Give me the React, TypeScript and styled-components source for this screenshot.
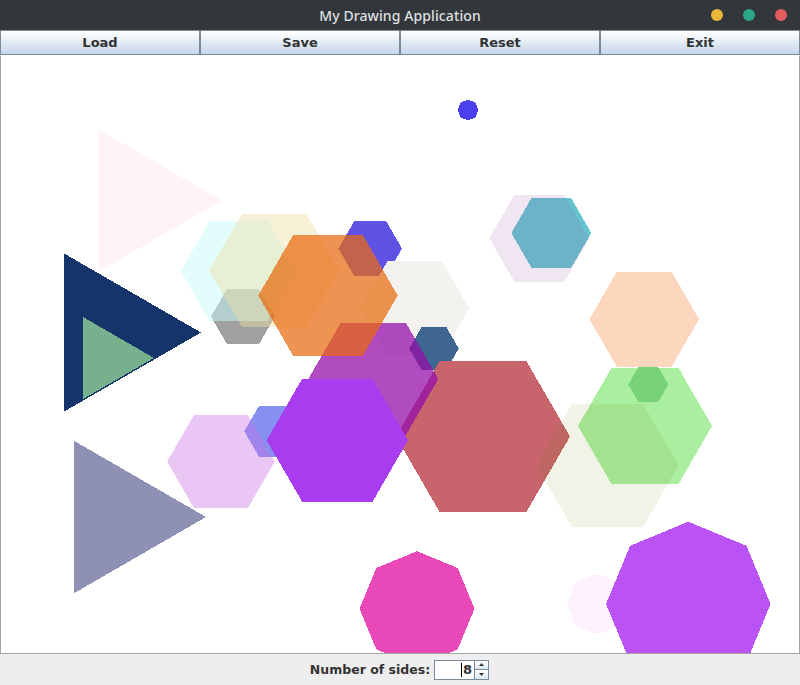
import React from "react";
import styled, { createGlobalStyle } from "styled-components";

const Global = createGlobalStyle`
  html, body { margin: 0; padding: 0; width: 800px; height: 685px; overflow: hidden; background: #eeeeee; }
  #root { width: 800px; height: 685px; }
`;

const Window = styled.div`
  width: 800px;
  height: 685px;
  display: flex;
  flex-direction: column;
  background: #eeeeee;
`;

const TitleBar = styled.div`
  height: 30px;
  flex: none;
  background: #33363b;
  display: grid;
  grid-template-columns: 1fr auto 1fr;
  align-items: center;
`;

const Title = styled.div`
  grid-column: 2;
  font-family: "Noto Sans", "DejaVu Sans", sans-serif;
  font-size: 14px;
  font-weight: 500;
  color: #dfe0e1;
  letter-spacing: 0.1px;
`;

const Controls = styled.div`
  grid-column: 3;
  justify-self: end;
  display: flex;
  gap: 20px;
  padding-right: 13px;
`;

const Dot = styled.span<{ $c: string }>`
  width: 12px;
  height: 12px;
  border-radius: 50%;
  background: ${(p) => p.$c};
`;

const Toolbar = styled.div`
  height: 25px;
  flex: none;
  display: grid;
  grid-template-columns: repeat(4, 1fr);
  background: #ffffff;
`;

const Button = styled.button`
  box-sizing: border-box;
  height: 25px;
  margin: 0;
  padding: 0;
  border: 1px solid #7a8a99;
  background: linear-gradient(#ffffff 0%, #f3f7fb 25%, #dce7f2 60%, #c5d7ea 100%);
  font-family: "DejaVu Sans", sans-serif;
  font-weight: bold;
  font-size: 13px;
  color: #333333;
  cursor: pointer;
`;

const Canvas = styled.div`
  flex: 1;
  box-sizing: border-box;
  background: #ffffff;
  border: 1px solid #a3a3a3;
  border-top-color: #ffffff;
  overflow: hidden;
`;

const Drawing = styled.svg`
  display: block;
  width: 798px;
  height: 598px;
`;

const BottomBar = styled.div`
  height: 31px;
  flex: none;
  display: flex;
  align-items: center;
  justify-content: center;
  gap: 4px;
  background: #eeeeee;
  padding-right: 1px;
`;

const Label = styled.span`
  font-family: "DejaVu Sans", sans-serif;
  font-weight: bold;
  font-size: 12.5px;
  color: #333333;
`;

const Spinner = styled.div`
  display: flex;
  height: 20px;
`;

const Field = styled.div`
  box-sizing: border-box;
  width: 40px;
  height: 20px;
  border: 1px solid #7a8a99;
  border-right: none;
  background: #ffffff;
  display: flex;
  align-items: center;
  justify-content: flex-end;
  padding-right: 2px;
  font-family: "DejaVu Sans", sans-serif;
  font-weight: bold;
  font-size: 13px;
  color: #333333;
`;

const Caret = styled.span`
  width: 1px;
  height: 14px;
  background: #000000;
  margin-right: 1px;
`;

const Arrows = styled.div`
  box-sizing: border-box;
  width: 15px;
  height: 20px;
  border: 1px solid #7a8a99;
  display: flex;
  flex-direction: column;
`;

const ArrowBtn = styled.div<{ $down?: boolean }>`
  flex: 1;
  display: flex;
  align-items: center;
  justify-content: center;
  background: linear-gradient(#ffffff, #dde8f3);
  border-top: ${(p) => (p.$down ? "1px solid #7a8a99" : "none")};
`;

type Shape = { n: number; cx: number; cy: number; r: number; fill: string };

const shapes: Shape[] = [
  { n: 3, cx: 139.4, cy: 200.5, r: 82.6, fill: "#fff2f8" },
  { n: 3, cx: 109.7, cy: 332.5, r: 91.3, fill: "#14346a" },
  { n: 3, cx: 106.7, cy: 358, r: 47.3, fill: "#77b08c" },
  { n: 3, cx: 117.7, cy: 517, r: 88.3, fill: "#8e90b4" },
  { n: 6, cx: 243, cy: 316.5, r: 32, fill: "#a0a0a0" },
  { n: 6, cx: 238.5, cy: 271, r: 57.7, fill: "rgba(199,251,251,0.5)" },
  { n: 6, cx: 274.2, cy: 270.5, r: 65, fill: "rgba(236,225,165,0.45)" },
  { n: 6, cx: 370.2, cy: 248.5, r: 31.8, fill: "#6152e6" },
  { n: 6, cx: 414.7, cy: 308.5, r: 54.5, fill: "#f3f2ef" },
  { n: 6, cx: 434, cy: 348.5, r: 24.7, fill: "#3f6690" },
  { n: 6, cx: 483, cy: 436.5, r: 87, fill: "#c8646c" },
  { n: 6, cx: 373.3, cy: 379, r: 65, fill: "rgba(148,14,170,0.74)" },
  { n: 6, cx: 328, cy: 295.5, r: 69.7, fill: "rgba(233,105,15,0.72)" },
  { n: 6, cx: 273.6, cy: 431.3, r: 29.3, fill: "#8690f0" },
  { n: 6, cx: 221, cy: 461.5, r: 53.8, fill: "rgba(202,112,230,0.4)" },
  { n: 6, cx: 337.3, cy: 440.3, r: 70.7, fill: "#a93cef" },
  { n: 6, cx: 551.3, cy: 233, r: 40, fill: "#64c4d0" },
  { n: 6, cx: 539.3, cy: 238.3, r: 50, fill: "rgba(155,88,168,0.15)" },
  { n: 6, cx: 644.2, cy: 319.2, r: 54.8, fill: "#fdd6be" },
  { n: 6, cx: 645, cy: 426, r: 67, fill: "#aaeea0" },
  { n: 6, cx: 648.3, cy: 384.5, r: 20, fill: "#78d278" },
  { n: 6, cx: 607.5, cy: 465.5, r: 71, fill: "rgba(105,135,5,0.1)" },
  { n: 8, cx: 417, cy: 608.7, r: 57.5, fill: "#e848b8" },
  { n: 8, cx: 597.3, cy: 604, r: 30.5, fill: "#fdf2fd" },
  { n: 8, cx: 688.3, cy: 604, r: 82.3, fill: "rgba(184,76,244,0.97)" },
  { n: 8, cx: 468, cy: 110, r: 10.5, fill: "#4a40f0" },
];

const points = (s: Shape) =>
  Array.from({ length: s.n }, (_, k) => {
    const a = (2 * Math.PI * k) / s.n;
    return `${(s.cx + s.r * Math.cos(a)).toFixed(1)},${(s.cy + s.r * Math.sin(a)).toFixed(1)}`;
  }).join(" ");

export default function App() {
  return (
    <>
      <Global />
      <Window>
        <TitleBar>
          <Title>My Drawing Application</Title>
          <Controls>
            <Dot $c="#e9b637" />
            <Dot $c="#2aa68a" />
            <Dot $c="#e35d5e" />
          </Controls>
        </TitleBar>
        <Toolbar>
          <Button>Load</Button>
          <Button>Save</Button>
          <Button>Reset</Button>
          <Button>Exit</Button>
        </Toolbar>
        <Canvas>
          <Drawing viewBox="1 56 798 598" shapeRendering="crispEdges">
            {shapes.map((s, i) => (
              <polygon key={i} points={points(s)} fill={s.fill} />
            ))}
          </Drawing>
        </Canvas>
        <BottomBar>
          <Label>Number of sides:</Label>
          <Spinner>
            <Field>
              <Caret />
              8
            </Field>
            <Arrows>
              <ArrowBtn>
                <svg width="5" height="3" viewBox="0 0 5 3">
                  <path d="M2.5 0 L5 3 L0 3 Z" fill="#333" />
                </svg>
              </ArrowBtn>
              <ArrowBtn $down>
                <svg width="5" height="3" viewBox="0 0 5 3">
                  <path d="M0 0 L5 0 L2.5 3 Z" fill="#333" />
                </svg>
              </ArrowBtn>
            </Arrows>
          </Spinner>
        </BottomBar>
      </Window>
    </>
  );
}
